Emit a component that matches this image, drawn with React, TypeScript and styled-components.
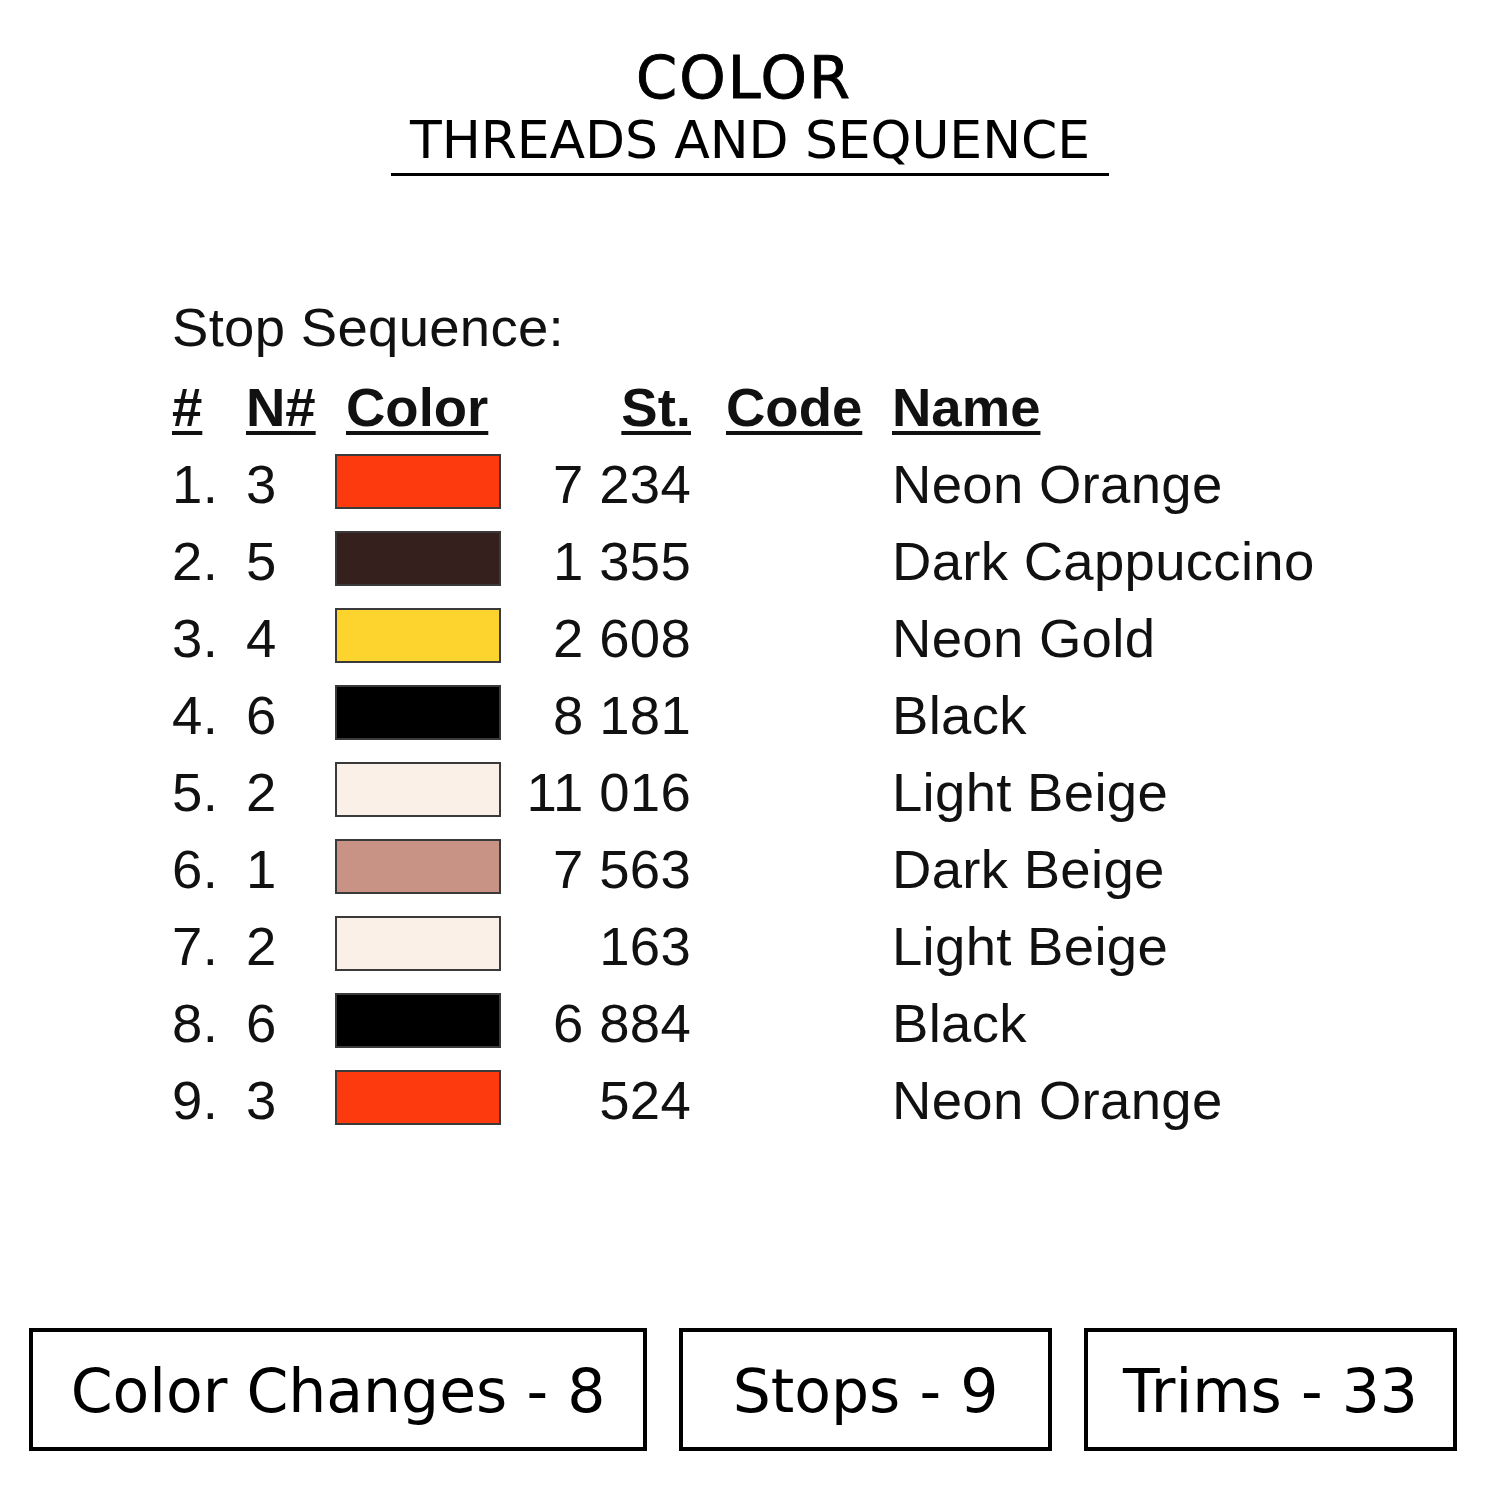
import React from "react";
import styled, { createGlobalStyle } from "styled-components";

const Global = createGlobalStyle`
  html, body { margin: 0; padding: 0; background: #ffffff; }
  #root { width: 1500px; height: 1500px; }
`;

const Page = styled.div`
  width: 1500px;
  height: 1500px;
  background: #ffffff;
  color: #000;
  display: flex;
  flex-direction: column;
  padding-top: 43px;
  box-sizing: border-box;
`;

const TitleBlock = styled.header`
  align-self: center;
  display: flex;
  flex-direction: column;
  align-items: center;
  padding: 0 19px 3px;
  border-bottom: 3px solid #000;
  font-family: "DejaVu Sans", sans-serif;
`;

const Title = styled.h1`
  margin: 0 0 0 -12px;
  font-size: 59px;
  line-height: 70px;
  font-weight: 400;
  letter-spacing: 2px;
  -webkit-text-stroke: 0.9px #000;
`;

const Subtitle = styled.h2`
  margin: -3px 0 0;
  font-size: 52px;
  line-height: 60px;
  font-weight: 400;
  letter-spacing: -0.1px;
`;

const Sequence = styled.section`
  margin: 113px 0 0 172px;
  font-family: "Liberation Sans", Arial, sans-serif;
  font-size: 54.5px;
  letter-spacing: 0.3px;
  color: #111;
`;

const Caption = styled.div`
  line-height: 77px;
  height: 77px;
  margin-bottom: 3px;
`;

const Table = styled.div`
  display: grid;
  grid-template-columns: 74px 89px 166px 190px 201px auto;
  grid-auto-rows: 77px;
  align-items: center;
`;

const Head = styled.div<{ $align?: "left" | "right"; $pad?: number }>`
  font-weight: 700;
  line-height: 77px;
  letter-spacing: 0;
  text-align: ${(p) => p.$align ?? "left"};
  padding-left: ${(p) => p.$pad ?? 0}px;
  span {
    text-decoration: underline;
    text-decoration-thickness: 4px;
    text-underline-offset: 5px;
  }
`;

const Cell = styled.div<{ $align?: "left" | "right"; $pad?: number }>`
  line-height: 77px;
  white-space: nowrap;
  text-align: ${(p) => p.$align ?? "left"};
  padding-left: ${(p) => p.$pad ?? 0}px;
`;

const Swatch = styled.div<{ $color: string }>`
  width: 166px;
  height: 55px;
  box-sizing: border-box;
  border: 2px solid #3a3a3a;
  background: ${(p) => p.$color};
  margin-top: -6px;
`;

const Stats = styled.footer`
  margin: 189px 0 0 29px;
  display: flex;
  gap: 32px;
  font-family: "DejaVu Sans", sans-serif;
`;

const StatBox = styled.div<{ $w: number }>`
  width: ${(p) => p.$w}px;
  height: 123px;
  box-sizing: border-box;
  border: 4px solid #000;
  display: flex;
  align-items: center;
  justify-content: center;
  font-size: 60px;
  line-height: 1;
  padding-top: 2px;
`;

const rows = [
  { n: 3, color: "#FC3A0E", st: "7 234", name: "Neon Orange" },
  { n: 5, color: "#35201D", st: "1 355", name: "Dark Cappuccino" },
  { n: 4, color: "#FDD42E", st: "2 608", name: "Neon Gold" },
  { n: 6, color: "#000000", st: "8 181", name: "Black" },
  { n: 2, color: "#FAF0E8", st: "11 016", name: "Light Beige" },
  { n: 1, color: "#C89385", st: "7 563", name: "Dark Beige" },
  { n: 2, color: "#FAF0E8", st: "163", name: "Light Beige" },
  { n: 6, color: "#000000", st: "6 884", name: "Black" },
  { n: 3, color: "#FC3A0E", st: "524", name: "Neon Orange" },
];

export default function App() {
  return (
    <Page>
      <Global />
      <TitleBlock>
        <Title>COLOR</Title>
        <Subtitle>THREADS AND SEQUENCE</Subtitle>
      </TitleBlock>
      <Sequence>
        <Caption>Stop Sequence:</Caption>
        <Table>
          <Head><span>#</span></Head>
          <Head><span>N#</span></Head>
          <Head $pad={11}><span>Color</span></Head>
          <Head $align="right"><span>St.</span></Head>
          <Head $pad={35}><span>Code</span></Head>
          <Head><span>Name</span></Head>
          {rows.map((r, i) => (
            <React.Fragment key={i}>
              <Cell>{i + 1}.</Cell>
              <Cell>{r.n}</Cell>
              <Swatch $color={r.color} />
              <Cell $align="right">{r.st}</Cell>
              <Cell />
              <Cell>{r.name}</Cell>
            </React.Fragment>
          ))}
        </Table>
      </Sequence>
      <Stats>
        <StatBox $w={618}>Color Changes - 8</StatBox>
        <StatBox $w={373}>Stops - 9</StatBox>
        <StatBox $w={373}>Trims - 33</StatBox>
      </Stats>
    </Page>
  );
}
